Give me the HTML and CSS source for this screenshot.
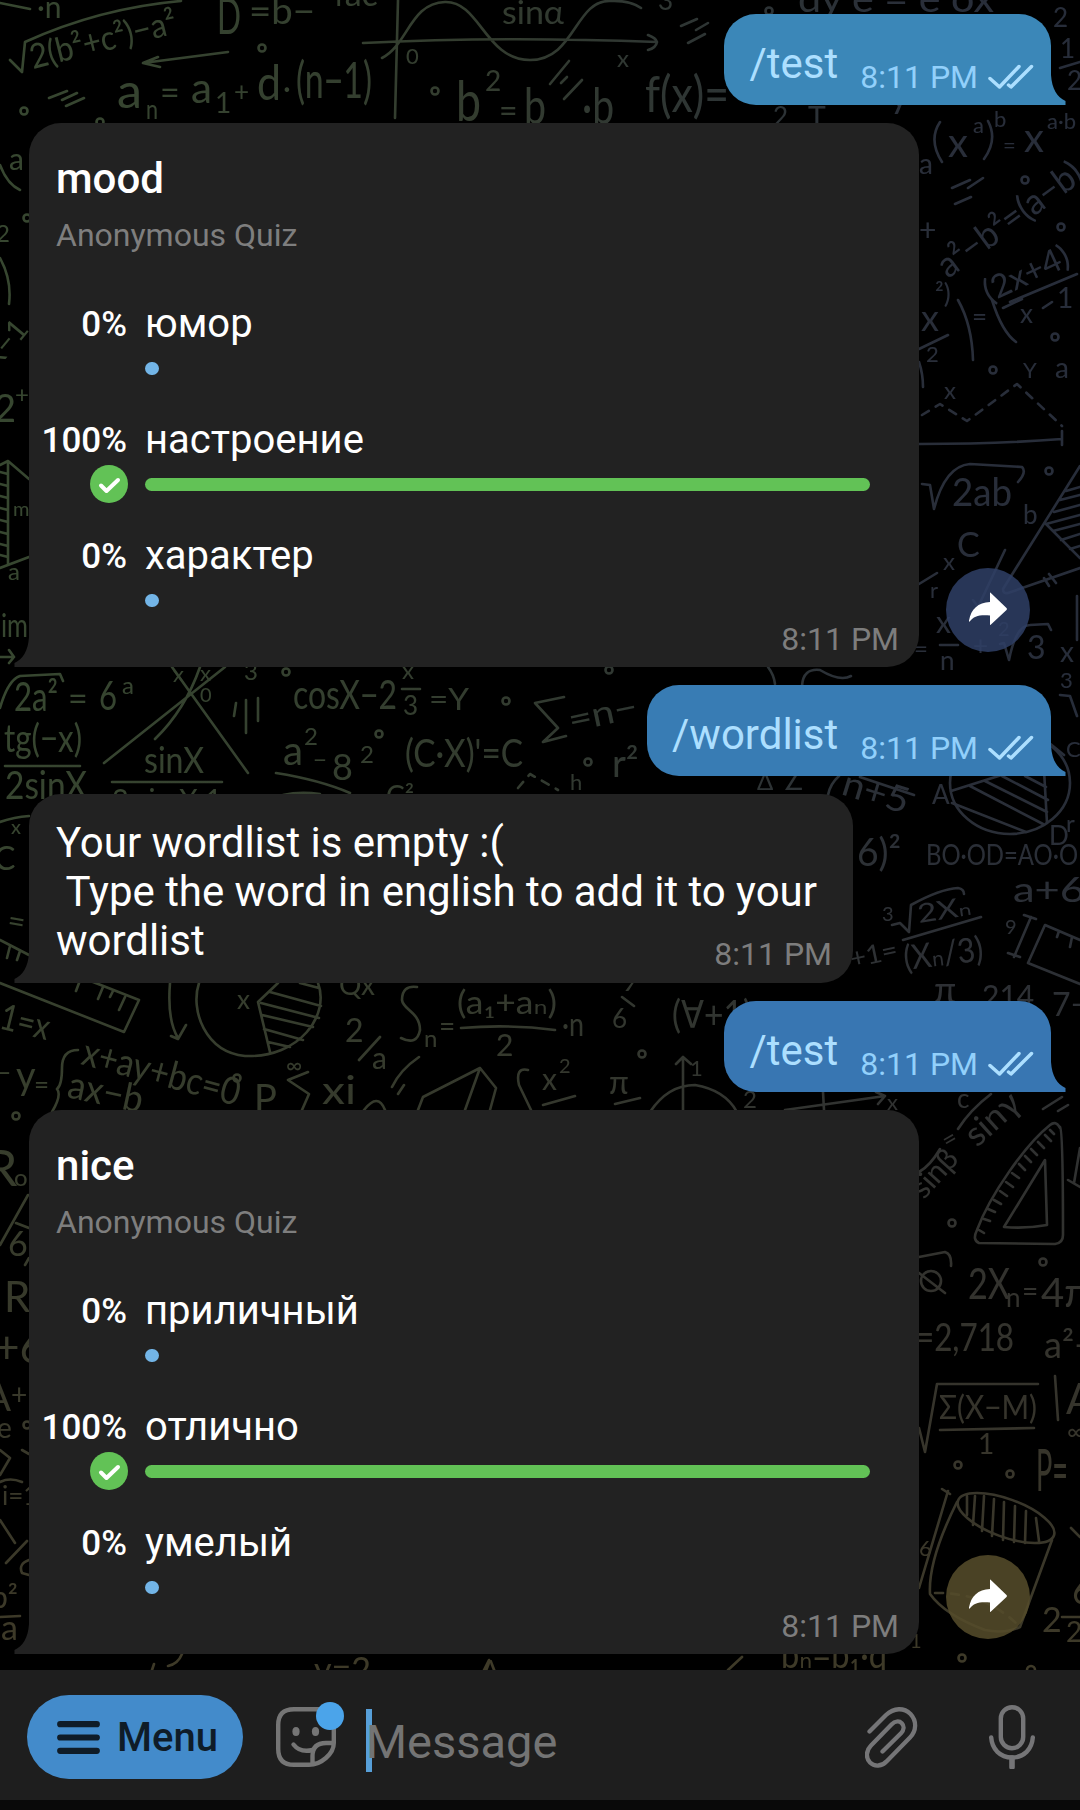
FILE: index.html
```html
<!DOCTYPE html>
<html lang="en">
<head>
<meta charset="utf-8">
<title>Chat</title>
<link rel="stylesheet" href="styles.css">
</head>
<body>
<svg class="wallpaper" viewBox="0 0 1080 1810" aria-hidden="true">
  <defs>
    <linearGradient id="tint" x1="0" y1="0" x2="1" y2="0">
      <stop offset="0" stop-color="#374730"/><stop offset=".45" stop-color="#333c2f"/><stop offset=".85" stop-color="#292e39"/><stop offset="1" stop-color="#272d3a"/>
    </linearGradient>
    <linearGradient id="warm" x1="0" y1="0" x2="0" y2="1">
      <stop offset=".4" stop-color="#37352a" stop-opacity="0"/><stop offset=".78" stop-color="#383529" stop-opacity=".85"/><stop offset=".92" stop-color="#3e3a28"/>
    </linearGradient>
    <mask id="chalk" maskUnits="userSpaceOnUse" x="0" y="0" width="1080" height="1810">
      <g class="strokes">
        <path d="M0 3L30 9M10 60L22 72L25 42Q100 8 181 1M228 52L143 63L158 57M143 63L160 67M49 98L67 91M62 100L77 93M66 106L84 98"/>
        <path d="M398 0L395 118M363 43Q500 36 657 42M648 35Q656 38 657 42Q656 48 648 50M382 58C408 45 410 3 445 2S485 60 530 60S575 0 610 1Q630 0 641 8"/>
        <path d="M681 26L697 19M696 30L708 23M688 43L705 34M550 84L569 61M561 83L567 77M564 99L582 80"/>
        <path d="M952 188L970 180M968 188L983 178M955 204L971 197M1010 302L1077 274M1060 68L1080 62M940 122Q928 140 942 162M988 121Q998 140 984 159"/>
        <path d="M919 349L948 335M958 300Q972 325 973 360M992 300Q1002 332 1016 342M1003 308L1022 299M1043 308L1052 302M919 362Q923 374 923 387"/>
        <path class="dashed" d="M922 415L940 404L967 421L1017 384L1062 426"/>
        <path d="M919 444Q1000 444 1062 439M1062 431V445M922 484L930 485L934 509Q945 466 970 464L1022 467Q1027 472 1018 482"/>
        <path d="M1080 466L1003 589Q1003 594 1008 593L1080 568M1046 524L1080 558M1066 491L1080 487M1060 500L1080 495M1054 512L1080 505M1046 524L1080 515M1053 531L1080 524M1061 540L1080 534M1070 549L1080 546M1044 578L1049 586M1049 574L1056 583"/>
        <path d="M919 584L937 573M1005 550L978 607L973 600M940 645H958M1000 644L1004 643L1009 660Q1016 625 1030 625L1048 624L1051 630M1077 596V640M1060 695L1070 696L1077 716"/>
        <path d="M802 686Q803 668 820 670Q840 682 851 676M768 667Q774 675 775 684"/>
        <ellipse cx="1010" cy="783" rx="60" ry="51"/>
        <path d="M951 791L1008 773M952 803L1026 832M970 786L1043 824M985 781L1047 812M1002 776L1048 800M1025 776L1046 787M1044 770L1047 823M860 777L914 795M828 795Q830 784 839 776M1048 742L1064 755"/>
        <path d="M1080 940L1045 925L1028 963L1080 984M1059 931L1057 937M1072 937L1070 947M1024 915L1036 919M1031 917L1014 957M1008 953L1020 957M892 925L900 923L909 932L911 905Q940 889 958 888Q964 889 964 894M903 940L981 917"/>
        <path d="M0 708Q8 680 20 676L60 674L63 681M172 667L248 773M225 667L104 763M200 667Q185 710 155 739M236 703L234 716M246 700V733M258 698V721M5 766H80M112 782H222M402 689H420M564 697L535 703L558 728L543 742L566 736M276 773Q320 780 350 793M283 795Q300 791 320 794"/>
        <path class="dashed" d="M518 788L530 774L558 790"/>
        <path d="M0 165Q7 184 20 190M0 258Q12 280 9 304M8 461V565M0 465L8 461L29 479M0 568L29 557M0 472L8 474M0 484L8 486M0 496L8 498M0 508L8 510M0 520L8 522M0 532L8 534M0 544L8 546M0 555L8 557M0 657H14L9 650M14 657L9 663M0 822Q14 817 29 816M0 940L29 955M10 946L7 958M20 951L17 960"/>
        <path d="M0 983L124 1032L139 1000L88 980M79 983L76 991M103 987L98 999M113 991L110 997M125 997L119 1010M170 983Q167 1020 178 1038M171 1036L178 1039L186 1025"/>
        <path d="M199 983C190 1010 205 1052 245 1056C300 1058 330 1015 318 983M278 983L258 1002L270 1052M300 983L319 988M270 992L321 1006M261 1003L319 1018M262 1015L313 1027M264 1029L303 1040M268 1042L290 1047"/>
        <path d="M78 1050Q62 1050 62 1068Q62 1085 57 1089Q62 1095 52 1112M380 1037L359 1060M417 987Q402 985 402 1000C403 1010 420 1012 420 1030Q417 1046 401 1038M461 1028Q510 1024 555 1030M419 1057Q400 1070 392 1087M404 1085L398 1094M308 1072L288 1080L309 1094L302 1110M418 1110L423 1097L480 1068L496 1088L490 1110M480 1068L465 1110M528 1070Q515 1067 519 1085L531 1110M543 1105L575 1096M615 1104L640 1098M364 1110Q378 1092 385 1110M622 997L634 1006"/>
        <path d="M683 1110V1057M676 1064L683 1057L691 1064M650 1112Q668 1085 695 1085Q725 1090 737 1112M785 1110L885 1096L878 1104M885 1096L876 1092M823 1092L824 1110M991 1094Q970 1110 958 1129M940 1149Q930 1166 919 1172M1043 1109L1062 1097M1058 1111L1068 1105"/>
        <path d="M1060 1127Q1063 1130 1063 1235Q1063 1243 1055 1244L979 1243Q972 1240 977 1230C990 1195 1025 1145 1050 1125Q1056 1120 1060 1128M1045 1160L1047 1225Q1025 1229 1004 1227ZM1050 1130L1054 1134M1045 1135L1051 1141M1038 1142L1044 1148M1031 1149L1037 1155M1025 1156L1031 1162M1019 1164L1025 1170M1012 1173L1019 1178M1006 1182L1013 1187M1000 1191L1007 1196M994 1200L1001 1204M988 1209L995 1212M984 1219L990 1221M979 1230L984 1233"/>
        <path d="M919 1257L945 1252Q952 1254 951 1266M919 1273L945 1293M1068 1180L1080 1187M1080 1148L1074 1183M919 1428L925 1452L937 1384H1038M940 1430L1034 1428M1055 1376L1058 1420"/>
        <circle cx="931" cy="1281" r="10"/>
        <ellipse cx="1006" cy="1518" rx="51" ry="19" transform="rotate(20 1006 1518)"/>
        <path d="M967 1496V1515M975 1496L973 1525M984 1496L982 1531M994 1499L992 1536M1004 1502L1003 1540M1015 1506L1014 1542M1026 1511L1025 1543M1036 1518L1039 1541M957 1502Q928 1560 930 1594Q945 1615 985 1630Q1005 1634 1020 1627L1052 1540M948 1491L919 1588M942 1489L950 1494M1062 1617H1080M1071 1528L1080 1537"/>
        <path class="dashed" d="M935 1593Q985 1592 1019 1626"/>
        <path d="M28 1195L0 1245M16 1223L29 1228M25 1265L29 1258M0 1450L10 1458L0 1475M22 1450L29 1454M0 1520L15 1543M27 1541L6 1563M0 1482Q10 1477 22 1482M0 1617L20 1616M29 1560Q18 1564 22 1573L29 1575M182 1654Q178 1664 168 1666M154 1664L152 1670M489 1660L484 1670M742 1657L728 1670"/>
        <circle cx="262" cy="48" r="3.5"/><circle cx="435" cy="91" r="3.5"/><circle cx="24" cy="111" r="3.5"/><circle cx="100" cy="122" r="3.5"/><circle cx="769" cy="11" r="3.5"/>
        <circle cx="1025" cy="180" r="3.5"/><circle cx="1061" cy="227" r="3.5"/><circle cx="1055" cy="337" r="3.5"/><circle cx="993" cy="370" r="3.5"/><circle cx="1049" cy="471" r="3.5"/>
        <circle cx="286" cy="672" r="3.5"/><circle cx="506" cy="701" r="3.5"/><circle cx="379" cy="734" r="3.5"/><circle cx="588" cy="762" r="3.5"/><circle cx="609" cy="670" r="3.5"/>
        <circle cx="237" cy="1078" r="3.5"/><circle cx="16" cy="1116" r="3.5"/><circle cx="642" cy="1054" r="3.5"/><circle cx="952" cy="1223" r="3.5"/><circle cx="1043" cy="1262" r="3.5"/>
        <circle cx="958" cy="1465" r="3.5"/><circle cx="1010" cy="1474" r="3.5"/><circle cx="962" cy="1658" r="3.5"/><circle cx="27" cy="218" r="3.5"/><circle cx="1031" cy="1670" r="4"/><circle cx="27" cy="1425" r="3.5"/>
      </g>
      <g class="glyphs">
        <text x="37" y="18" font-size="30">·n</text>
        <text font-size="34" textLength="150" lengthAdjust="spacingAndGlyphs" transform="translate(33 69) rotate(-14)">2(b²+c²)−a²</text>
        <text x="217" y="34" font-size="50" textLength="24" lengthAdjust="spacingAndGlyphs">D</text>
        <text x="249" y="24" font-size="36" textLength="66" lengthAdjust="spacingAndGlyphs">=b−</text><text x="325" y="6" font-size="34">4ac</text>
        <text x="117" y="108" font-size="48" textLength="25" lengthAdjust="spacingAndGlyphs">a</text><text x="146" y="119" font-size="26" textLength="12" lengthAdjust="spacingAndGlyphs">n</text><text x="160" y="105" font-size="34">=</text>
        <text x="191" y="103" font-size="42" textLength="21" lengthAdjust="spacingAndGlyphs">a</text><text x="215" y="113" font-size="28">1</text><text x="234" y="101" font-size="26">+</text>
        <text x="257" y="100" font-size="48" textLength="24" lengthAdjust="spacingAndGlyphs">d</text><text x="283" y="99" font-size="30">·</text><text x="296" y="98" font-size="50" textLength="76" lengthAdjust="spacingAndGlyphs">(n−1)</text>
        <text x="406" y="64" font-size="22">0</text><text x="502" y="24" font-size="32" textLength="62" lengthAdjust="spacingAndGlyphs">sinα</text><text x="617" y="67" font-size="24">x</text>
        <text x="456" y="121" font-size="56" textLength="25" lengthAdjust="spacingAndGlyphs">b</text><text x="485" y="91" font-size="28">2</text><text x="499" y="122" font-size="32">=</text><text x="524" y="124" font-size="50" textLength="22" lengthAdjust="spacingAndGlyphs">b</text>
        <text x="582" y="124" font-size="50" textLength="32" lengthAdjust="spacingAndGlyphs">·b</text><text x="645" y="112" font-size="50" textLength="84" lengthAdjust="spacingAndGlyphs">f(x)=</text>
        <text x="658" y="10" font-size="26">3'</text><text x="798" y="12" font-size="36" textLength="196" lengthAdjust="spacingAndGlyphs">dy e = e ox</text>
        <text x="773" y="126" font-size="26">2</text><text x="808" y="128" font-size="30">T</text><text x="890" y="108" font-size="36">y</text>
        <text x="1053" y="27" font-size="26">2</text><text x="1060" y="58" font-size="26">1</text><text x="1067" y="90" font-size="26">2</text>
        <text x="948" y="157" font-size="40">x</text><text x="973" y="133" font-size="22">a</text><text x="994" y="127" font-size="22">b</text><text x="1003" y="153" font-size="22">=</text><text x="1024" y="152" font-size="40">x</text><text x="1047" y="129" font-size="22">a·b</text>
        <text font-size="36" textLength="170" lengthAdjust="spacingAndGlyphs" transform="translate(948 279) rotate(-36)">a²−b²=(a−b)</text>
        <text x="919" y="241" font-size="30">+</text><text x="919" y="174" font-size="28">a</text>
        <text font-size="32" textLength="92" lengthAdjust="spacingAndGlyphs" transform="translate(989 303) rotate(-25)">(2x+4)</text>
        <text x="1057" y="308" font-size="28">1</text><text x="935" y="303" font-size="26">²)</text>
        <text x="921" y="331" font-size="36">x</text><text x="926" y="362" font-size="22">2</text><text x="972" y="326" font-size="26">=</text><text x="1020" y="323" font-size="26">x</text><text x="1023" y="378" font-size="22">Y</text><text x="1055" y="378" font-size="28">a</text><text x="944" y="399" font-size="24">x</text>
        <text x="952" y="506" font-size="38" textLength="60" lengthAdjust="spacingAndGlyphs">2ab</text><text x="1023" y="524" font-size="26">b</text>
        <text x="957" y="557" font-size="34">C</text><text x="943" y="570" font-size="24">x</text><text x="930" y="598" font-size="22">r</text><text x="936" y="633" font-size="30">x</text><text x="914" y="657" font-size="24">=</text><text x="940" y="670" font-size="26">n</text><text x="973" y="655" font-size="26">+</text><text x="998" y="636" font-size="20">2</text><text x="1027" y="659" font-size="32">3</text><text x="1060" y="662" font-size="28">x</text><text x="1060" y="688" font-size="22">3</text>
        <text x="932" y="804" font-size="26">A</text><text x="1066" y="757" font-size="22">C</text>
        <text font-size="36" textLength="68" lengthAdjust="spacingAndGlyphs" transform="translate(840 794) rotate(17)">n+5</text>
        <text x="757" y="790" font-size="24">Δ</text><text x="783" y="790" font-size="24">∠</text>
        <text x="857" y="866" font-size="38" textLength="44" lengthAdjust="spacingAndGlyphs">6)²</text>
        <text x="926" y="865" font-size="28" textLength="152" lengthAdjust="spacingAndGlyphs">BO·OD=AO·O</text>
        <text x="1049" y="845" font-size="26">D</text><text x="1066" y="832" font-size="24">r</text><text x="1013" y="902" font-size="34" textLength="72" lengthAdjust="spacingAndGlyphs">a+6</text><text x="1005" y="934" font-size="20">9</text>
        <text x="882" y="921" font-size="20">3</text><text font-size="26" textLength="54" lengthAdjust="spacingAndGlyphs" transform="translate(919 923) rotate(-9)">2Xₙ</text>
        <text font-size="34" textLength="80" lengthAdjust="spacingAndGlyphs" transform="translate(905 970) rotate(-7)">(Xₙ/3)</text>
        <text font-size="26" textLength="48" lengthAdjust="spacingAndGlyphs" transform="translate(852 968) rotate(-12)">+1=</text>
        <text x="934" y="1003" font-size="36">π</text><text x="982" y="1007" font-size="30">214</text><text x="1052" y="1016" font-size="32">7−</text>
        <text x="672" y="1028" font-size="38" textLength="80" lengthAdjust="spacingAndGlyphs">(∀+1)</text>
        <text x="14" y="711" font-size="40" textLength="44" lengthAdjust="spacingAndGlyphs">2a²</text><text x="68" y="711" font-size="34">=</text><text x="99" y="710" font-size="40" textLength="18" lengthAdjust="spacingAndGlyphs">6</text><text x="122" y="694" font-size="24">a</text>
        <text x="4" y="752" font-size="38" textLength="78" lengthAdjust="spacingAndGlyphs">tg(−x)</text><text x="5" y="799" font-size="38" textLength="82" lengthAdjust="spacingAndGlyphs">2sinX</text>
        <text x="144" y="773" font-size="36" textLength="60" lengthAdjust="spacingAndGlyphs">sinX</text><text x="112" y="811" font-size="30" textLength="110" lengthAdjust="spacingAndGlyphs">2 sin X·1</text>
        <text x="173" y="682" font-size="22">x</text><text x="200" y="681" font-size="22">x</text><text x="200" y="702" font-size="20">0</text><text x="244" y="680" font-size="24">3</text>
        <text x="293" y="709" font-size="40" textLength="104" lengthAdjust="spacingAndGlyphs">cosX−2</text><text x="402" y="679" font-size="24">x</text><text x="403" y="715" font-size="26">3</text><text x="429" y="710" font-size="30" textLength="40" lengthAdjust="spacingAndGlyphs">=Y</text>
        <text x="571" y="732" font-size="34" textLength="70" lengthAdjust="spacingAndGlyphs" transform="rotate(-12 571 732)">=n−</text>
        <text x="283" y="765" font-size="40" textLength="20" lengthAdjust="spacingAndGlyphs">a</text><text x="304" y="745" font-size="24">2</text><text x="313" y="768" font-size="24">−</text><text x="332" y="780" font-size="36">8</text><text x="360" y="763" font-size="24">2</text>
        <text x="405" y="767" font-size="38" textLength="118" lengthAdjust="spacingAndGlyphs">(C·X)'=C</text><text x="612" y="777" font-size="38">r²</text><text x="386" y="806" font-size="28">C²</text><text x="570" y="790" font-size="22">h</text>
        <text x="9" y="170" font-size="30">a</text><text font-size="30" transform="translate(-2 368) rotate(-50)">x−1</text><text x="-6" y="422" font-size="38">2</text><text x="15" y="403" font-size="24">+</text><text x="13" y="516" font-size="20">m</text><text x="8" y="580" font-size="24">a</text><text x="1" y="637" font-size="32" textLength="27" lengthAdjust="spacingAndGlyphs">im</text><text x="-4" y="242" font-size="24">2</text>
        <text x="11" y="834" font-size="20">x</text><text x="-6" y="870" font-size="32">C</text><text x="7" y="930" font-size="30" transform="rotate(10 7 925)">=</text>
        <text font-size="36" textLength="50" lengthAdjust="spacingAndGlyphs" transform="translate(-2 1028) rotate(14)">1=x</text><text x="16" y="1089" font-size="38">y</text><text x="34" y="1094" font-size="26">=</text><text x="-4" y="1082" font-size="26">−</text>
        <text font-size="38" textLength="162" lengthAdjust="spacingAndGlyphs" transform="translate(80 1064) rotate(15)">x+ay+bc=0</text>
        <text font-size="38" textLength="76" lengthAdjust="spacingAndGlyphs" transform="translate(66 1097) rotate(12)">ax−b</text>
        <text x="237" y="1009" font-size="26">x</text><text x="339" y="995" font-size="28">Qx</text><text x="345" y="1042" font-size="32">2</text><text x="372" y="1069" font-size="30">a</text>
        <text x="424" y="1047" font-size="24">n</text><text x="439" y="1036" font-size="28">=</text><text x="457" y="1014" font-size="32" textLength="100" lengthAdjust="spacingAndGlyphs">(a₁+aₙ)</text><text x="562" y="1036" font-size="32" textLength="22" lengthAdjust="spacingAndGlyphs">·n</text><text x="496" y="1056" font-size="30">2</text><text x="612" y="1028" font-size="26">6</text><text x="622" y="991" font-size="26">9</text>
        <text x="254" y="1112" font-size="38">P</text><text x="286" y="1073" font-size="22">∞</text><text x="322" y="1104" font-size="38" textLength="34" lengthAdjust="spacingAndGlyphs">xi</text><text x="542" y="1090" font-size="30">x</text><text x="559" y="1073" font-size="20">2</text><text x="609" y="1094" font-size="32">π</text>
        <text x="690" y="1076" font-size="22">1</text><text x="743" y="1108" font-size="24">2</text><text x="887" y="1110" font-size="22">x</text><text x="957" y="1108" font-size="26">c</text>
        <text font-size="34" textLength="62" lengthAdjust="spacingAndGlyphs" transform="translate(977 1148) rotate(-42)">sinγ</text><text x="943" y="1147" font-size="24" transform="rotate(-30 950 1140)">=</text>
        <text font-size="30" textLength="54" lengthAdjust="spacingAndGlyphs" transform="translate(924 1200) rotate(-48)">sinβ</text>
        <text x="968" y="1299" font-size="42" textLength="42" lengthAdjust="spacingAndGlyphs">2X</text><text x="1006" y="1307" font-size="26">n</text><text x="1022" y="1301" font-size="28">=</text><text x="1041" y="1307" font-size="40">4π</text>
        <text x="916" y="1351" font-size="38" textLength="98" lengthAdjust="spacingAndGlyphs">=2,718</text><text x="1044" y="1358" font-size="36">a²−</text>
        <text x="939" y="1419" font-size="32" textLength="98" lengthAdjust="spacingAndGlyphs">Σ(X−M)</text><text x="978" y="1454" font-size="28">1</text><text x="1066" y="1414" font-size="42">A</text><text x="1036" y="1491" font-size="58" textLength="32" lengthAdjust="spacingAndGlyphs">P=</text><text x="1067" y="1440" font-size="24">∞</text>
        <text x="919" y="1556" font-size="22">6</text><text x="1042" y="1632" font-size="34">2</text><text x="1072" y="1604" font-size="36">6</text><text x="1066" y="1642" font-size="28">2</text>
        <text x="781" y="1668" font-size="36" textLength="106" lengthAdjust="spacingAndGlyphs">bₙ=b₁·q</text><text x="910" y="1648" font-size="20">1</text>
        <text x="-14" y="1186" font-size="50">R</text><text x="14" y="1186" font-size="24">o</text><text x="8" y="1256" font-size="34">6</text>
        <text x="4" y="1312" font-size="42">R</text><text x="-6" y="1363" font-size="44">+6</text><text x="-16" y="1411" font-size="40">A</text><text x="11" y="1405" font-size="28">+</text><text x="-3" y="1438" font-size="28">e</text><text x="2" y="1505" font-size="26">i=1</text><text x="-9" y="1608" font-size="30">b²</text><text x="1" y="1640" font-size="34">a</text>
        <text x="314" y="1682" font-size="34">y=2</text><text x="480" y="1682" font-size="30">A</text>
      </g>
    </mask>
  </defs>
  <g mask="url(#chalk)"><rect width="1080" height="1810" fill="url(#tint)"/><rect width="1080" height="1810" fill="url(#warm)"/></g>
</svg>

<svg class="defs" width="0" height="0">
  <symbol id="tail" viewBox="0 0 15 30"><path d="M0 0C1 14 6 22 14.5 26V30H0Z" fill="currentColor"/></symbol>
  <symbol id="ticks" viewBox="0 0 46 26"><path d="M2 14.500L11.500 23L31 2.500M20.500 21L23 23L43.500 2.500" fill="none" stroke="currentColor" stroke-width="3.500" stroke-linecap="round" stroke-linejoin="round"/></symbol>
  <symbol id="share" viewBox="0 0 40 34"><path d="M22 .8Q22 .2 22.600.700L38.500 16Q39.500 17 38.500 18L22.700 32.800Q22 33.300 22 32.500V23.500C12 22.500 5.500 24 1.800 29.500Q.8 30 1 28.500C3 17 10 10.500 22 10Z" fill="#fff"/></symbol>
  <symbol id="correct" viewBox="0 0 38 38"><circle cx="19" cy="19" r="19" fill="#62c256"/><path d="M11 20.500L16.500 26L28 15" fill="none" stroke="#fff" stroke-width="4" stroke-linecap="round" stroke-linejoin="round"/></symbol>
</svg>

<main class="chat">
  <div class="bubble out first"><span class="command">/test</span><span class="time">8:11 PM</span><svg class="ticks"><use href="#ticks"/></svg><svg class="tail"><use href="#tail"/></svg></div>

  <div class="row">
    <section class="bubble in quiz">
      <h2>mood</h2>
      <p class="kind">Anonymous Quiz</p>
      <ul>
        <li><span class="pct">0%</span><span class="answer">юмор</span><i class="dot"></i></li>
        <li><span class="pct">100%</span><span class="answer">настроение</span><svg class="correct"><use href="#correct"/></svg><i class="bar"></i></li>
        <li><span class="pct">0%</span><span class="answer">характер</span><i class="dot"></i></li>
      </ul>
      <span class="time">8:11 PM</span><svg class="tail"><use href="#tail"/></svg>
    </section>
    <button class="share blue"><svg><use href="#share"/></svg></button>
  </div>

  <div class="bubble out second"><span class="command">/wordlist</span><span class="time">8:11 PM</span><svg class="ticks"><use href="#ticks"/></svg><svg class="tail"><use href="#tail"/></svg></div>

  <section class="bubble in message">
    <p>Your wordlist is empty :(
 Type the word in english to add it to your</p>
    <div class="last-line"><span>wordlist</span><span class="time">8:11 PM</span></div>
    <svg class="tail"><use href="#tail"/></svg>
  </section>

  <div class="bubble out third"><span class="command">/test</span><span class="time">8:11 PM</span><svg class="ticks"><use href="#ticks"/></svg><svg class="tail"><use href="#tail"/></svg></div>

  <div class="row">
    <section class="bubble in quiz">
      <h2>nice</h2>
      <p class="kind">Anonymous Quiz</p>
      <ul>
        <li><span class="pct">0%</span><span class="answer">приличный</span><i class="dot"></i></li>
        <li><span class="pct">100%</span><span class="answer">отлично</span><svg class="correct"><use href="#correct"/></svg><i class="bar"></i></li>
        <li><span class="pct">0%</span><span class="answer">умелый</span><i class="dot"></i></li>
      </ul>
      <span class="time">8:11 PM</span><svg class="tail"><use href="#tail"/></svg>
    </section>
    <button class="share olive"><svg><use href="#share"/></svg></button>
  </div>
</main>

<footer class="composer">
  <button class="menu">
    <svg viewBox="0 0 43 33"><path d="M3.200 3.200H39.800M3.200 16.500H39.800M3.200 29.800H39.800" stroke="#0f1c28" stroke-width="6.200" stroke-linecap="round"/></svg>
    <span>Menu</span>
  </button>
  <span class="sticker">
    <svg viewBox="0 0 60 60"><g fill="none" stroke="#757575" stroke-width="4.400" stroke-linecap="round" stroke-linejoin="round"><path d="M57.800 36V18Q57.800 2.200 42 2.200H18Q2.200 2.200 2.200 18V42Q2.200 57.800 18 57.800H33C45 57.800 57.800 47 57.800 36H50Q36.500 36 36.500 49V57"/><path d="M17.500 37.500Q24 46 36.500 43"/></g><ellipse cx="20" cy="24.500" rx="3.600" ry="4.500" fill="#757575"/><ellipse cx="39.500" cy="24.500" rx="3.600" ry="4.500" fill="#757575"/></svg>
    <i class="badge"></i>
  </span>
  <div class="field"><i class="caret"></i><span>Message</span></div>
  <svg class="clip" viewBox="0 0 53 61"><path d="M4.500 24.500L21 8C29 .5 39 .5 45.500 7C52 14 51.500 24 45 30.500L22 54C17 59.500 9.500 60 5 55.500C.5 51 1 43.500 6 38.500L26.500 17.500C30 14 34 13.500 36.800 16.200C39.500 19 39 23 36 26.200L17.500 44.500" fill="none" stroke="#757577" stroke-width="4.300" stroke-linecap="round" stroke-linejoin="round"/></svg>
  <svg class="mic" viewBox="0 0 46 64"><g fill="none" stroke="#757577" stroke-width="4.400" stroke-linecap="round"><rect x="11.800" y="2.200" width="22.400" height="41" rx="11.200"/><path d="M2.200 32.500C3 44 11 52.500 23 52.500S43 44 43.800 32.500"/></g><path d="M23 53V62" stroke="#757577" stroke-width="5.600" stroke-linecap="round"/></svg>
</footer>
</body>
</html>
```
FILE: styles.css
```css
* { box-sizing: border-box; margin: 0; padding: 0; }

body {
  position: relative;
  display: flex;
  flex-direction: column;
  width: 1080px;
  height: 1810px;
  overflow: hidden;
  background: #000;
  color: #fff;
  font-family: Roboto, "Liberation Sans", sans-serif;
}

button { border: 0; font: inherit; }
ul { list-style: none; }
svg { display: block; }

.wallpaper { position: absolute; inset: 0; width: 1080px; height: 1810px; }
.defs { position: absolute; }
.strokes { fill: none; stroke: #fff; stroke-width: 2.6; stroke-linecap: round; stroke-linejoin: round; }
.dashed { stroke-dasharray: 8 8; }
.glyphs { fill: #fff; font-family: Lato, "DejaVu Sans", sans-serif; }

.chat {
  position: relative;
  display: flex;
  flex-direction: column;
  gap: 18px;
  height: 1670px;
  padding: 14px 29px 0;
}

.bubble { position: relative; border-radius: 32px; }
.row { display: flex; align-items: flex-end; gap: 27px; }

.out {
  display: flex;
  align-self: flex-end;
  align-items: flex-start;
  height: 91px;
  padding: 0 17px 0 25px;
  border-bottom-right-radius: 0;
  color: #acdfff;
}
.first { background: #3b87b8; }
.second { background: #387cb4; }
.third { background: #3876b2; }
.command { padding-top: 25px; font-size: 42px; line-height: 49px; }
.out .time { margin-left: 22px; color: #92d0fb; padding-top: 45px; }
.out .ticks { width: 46px; height: 26px; margin: 50px 0 0 10px; }
.tail { position: absolute; bottom: 0; width: 15px; height: 30px; }
.out .tail { left: 100%; color: #3b87b8; }
.second .tail { color: #387cb4; }
.third .tail { color: #3876b2; }

.in { background: #222; border-bottom-left-radius: 0; }
.in .tail { right: 100%; color: #222; transform: scaleX(-1); }
.time { font-size: 32px; line-height: 36px; white-space: nowrap; }
.in .time { color: #7d7d7d; }
.quiz > .time { position: absolute; right: 20px; bottom: 10px; }

.quiz { width: 890px; height: 544px; padding: 31px 28px 0 0; }
.quiz h2 { padding-left: 27px; font-size: 42px; line-height: 50px; font-weight: 500; }
.kind { margin-top: 12px; padding-left: 27px; font-size: 32px; line-height: 38px; color: #7e7e7e; }
.quiz ul { margin-top: 41px; }
.quiz li {
  display: grid;
  grid-template-columns: 99px 1fr;
  grid-template-rows: 54px 38px;
  column-gap: 17px;
  height: 116px;
}
.pct { margin-right: 1px; font-size: 35px; line-height: 60px; font-weight: 500; text-align: right; }
.answer { font-size: 40px; line-height: 58px; }
.dot, .bar { grid-column: 2; align-self: center; height: 13px; border-radius: 6.5px; }
.dot { width: 14px; background: #73b5e7; }
.bar { width: 725px; background: #62c256; }
.correct { width: 38px; height: 38px; justify-self: end; }

.share {
  display: flex;
  align-items: center;
  justify-content: center;
  width: 84px;
  height: 84px;
  margin-bottom: 15px;
  padding-bottom: 3px;
  border-radius: 50%;
}
.share svg { width: 40px; height: 34px; }
.blue { background: rgba(47, 63, 102, .85); }
.olive { background: rgba(85, 76, 42, .87); }

.message {
  align-self: flex-start;
  width: 824px;
  height: 189px;
  padding: 24px 21px 0 27px;
  font-size: 42px;
  line-height: 49px;
  letter-spacing: -.03px;
}
.message p { white-space: pre; }
.last-line { display: flex; align-items: flex-start; justify-content: space-between; }
.last-line .time { margin-top: 20px; letter-spacing: 0; }

.composer {
  position: relative;
  display: flex;
  align-items: flex-start;
  height: 140px;
  padding: 25px 45px 0 27px;
  background: #1e1e1e;
  border-bottom: 10px solid #090909;
}
.menu {
  display: flex;
  align-items: center;
  gap: 17px;
  width: 216px;
  height: 84px;
  padding-left: 30px;
  border-radius: 42px;
  background: #438bcb;
  color: #0f1c28;
  font-size: 40px;
  font-weight: 500;
}
.menu svg { width: 43px; height: 33px; }
.sticker { position: relative; margin: 12px 0 0 33px; }
.sticker svg { width: 60px; height: 60px; }
.badge { position: absolute; left: 40px; top: -5px; width: 28px; height: 28px; border-radius: 50%; background: #4ba4ea; }
.field { display: flex; flex: 1; margin: 14px 0 0 30px; height: 63px; color: #747474; font-size: 47px; line-height: 66px; }
.caret { width: 6px; height: 63px; margin-right: -6px; background: #579fd8; }
.clip { width: 53px; height: 61px; margin-top: 12px; }
.mic { width: 46px; height: 64px; margin: 10px 0 0 71px; }
```
